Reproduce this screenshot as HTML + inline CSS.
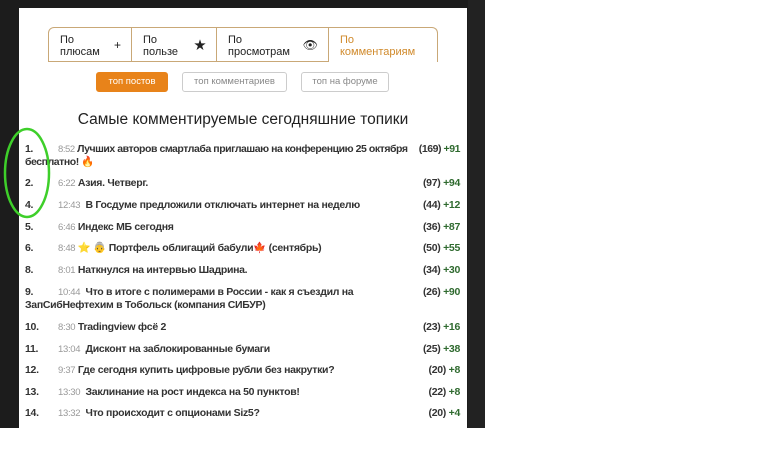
<!DOCTYPE html><html><head><meta charset="utf-8"><style>
body{margin:0;width:758px;height:474px;background:#fff;position:relative;overflow:hidden;font-family:"Liberation Sans","Noto Sans CJK SC",sans-serif}
.dark{position:absolute;left:0;top:0;width:485px;height:428px;background:#1c1c1c}
.strip{position:absolute;left:468px;top:0;width:17px;height:428px;background:#222}
.panel{position:absolute;left:19px;top:8px;width:448px;height:420px;background:#fff}
.tab{position:absolute;top:27px;height:35px;border:1px solid #c9a877;box-sizing:border-box;font-size:11px;line-height:12px;color:#222;padding:6px 0 0 11px}
.tab i{position:absolute;right:10px;top:11px;font-style:normal;font-size:12px}
.btn{position:absolute;top:72px;height:20px;border:1px solid #ccc;border-radius:3px;box-sizing:border-box;font-size:9.5px;line-height:18px;text-align:center;color:#888}
h1{position:absolute;top:111px;left:19px;width:448px;margin:0;text-align:center;font-size:15.5px;font-weight:normal;color:#222}
.r{position:absolute;left:25px;width:435px;font-size:10.5px;font-weight:bold;color:#333;line-height:12px;letter-spacing:-0.3px}
.r .n{position:absolute;left:0}
.r .t{color:#999;font-weight:normal;font-size:9.5px}
.r .c{position:absolute;right:0;top:0;background:#fff;padding-left:3px}
.g{color:#2f6a2f}
</style></head><body>
<div class="dark"></div><div class="strip"></div><div class="panel"></div>
<div class="tab" style="left:48px;width:84px;border-radius:6px 0 0 0">По<br>плюсам<i>+</i></div>
<div class="tab" style="left:131px;width:86px">По<br>пользе<i>★</i></div>
<div class="tab" style="left:216px;width:113px">По<br>просмотрам<i>👁</i></div>
<div class="tab" style="left:328px;width:110px;border-bottom:none;color:#d08a2c;border-radius:0 6px 0 0">По<br>комментариям</div>
<div class="btn" style="left:96px;width:72px;background:#e8831a;border-color:#e8831a;color:#fff">топ постов</div>
<div class="btn" style="left:182px;width:105px">топ комментариев</div>
<div class="btn" style="left:301px;width:88px">топ на форуме</div>
<h1>Самые комментируемые сегодняшние топики</h1>
<div class="r" style="top:143px;letter-spacing:-0.45px"><span class="n">1.</span><span style="padding-left:33px"><span class="t">8:52</span> Лучших авторов смартлаба приглашаю на конференцию 25 октября</span><span class="c">(169) <span class="g">+91</span></span><br>бесплатно! 🔥</div>
<div class="r" style="top:177px"><span class="n">2.</span><span style="padding-left:33px"><span class="t">6:22</span> Азия. Четверг.</span><span class="c">(97) <span class="g">+94</span></span></div>
<div class="r" style="top:199px"><span class="n">4.</span><span style="padding-left:33px"><span class="t">12:43</span> &nbsp;В Госдуме предложили отключать интернет на неделю</span><span class="c">(44) <span class="g">+12</span></span></div>
<div class="r" style="top:221px"><span class="n">5.</span><span style="padding-left:33px"><span class="t">6:46</span> Индекс МБ сегодня</span><span class="c">(36) <span class="g">+87</span></span></div>
<div class="r" style="top:242px"><span class="n">6.</span><span style="padding-left:33px"><span class="t">8:48</span> ⭐ 👵 Портфель облигаций бабули🍁 (сентябрь)</span><span class="c">(50) <span class="g">+55</span></span></div>
<div class="r" style="top:264px"><span class="n">8.</span><span style="padding-left:33px"><span class="t">8:01</span> Наткнулся на интервью Шадрина.</span><span class="c">(34) <span class="g">+30</span></span></div>
<div class="r" style="top:286px"><span class="n">9.</span><span style="padding-left:33px"><span class="t">10:44</span> &nbsp;Что в итоге с полимерами в России - как я съездил на</span><span class="c">(26) <span class="g">+90</span></span><br>ЗапСибНефтехим в Тобольск (компания СИБУР)</div>
<div class="r" style="top:321px"><span class="n">10.</span><span style="padding-left:33px"><span class="t">8:30</span> Tradingview фсё 2</span><span class="c">(23) <span class="g">+16</span></span></div>
<div class="r" style="top:343px"><span class="n">11.</span><span style="padding-left:33px"><span class="t">13:04</span> &nbsp;Дисконт на заблокированные бумаги</span><span class="c">(25) <span class="g">+38</span></span></div>
<div class="r" style="top:364px"><span class="n">12.</span><span style="padding-left:33px"><span class="t">9:37</span> Где сегодня купить цифровые рубли без накрутки?</span><span class="c">(20) <span class="g">+8</span></span></div>
<div class="r" style="top:386px"><span class="n">13.</span><span style="padding-left:33px"><span class="t">13:30</span> &nbsp;Заклинание на рост индекса на 50 пунктов!</span><span class="c">(22) <span class="g">+8</span></span></div>
<div class="r" style="top:407px"><span class="n">14.</span><span style="padding-left:33px"><span class="t">13:32</span> &nbsp;Что происходит с опционами Siz5?</span><span class="c">(20) <span class="g">+4</span></span></div>
<svg style="position:absolute;left:0;top:125px" width="60" height="100"><ellipse cx="27" cy="48" rx="22" ry="44" fill="none" stroke="#3ecf2a" stroke-width="2.5"/></svg>
</body></html>
